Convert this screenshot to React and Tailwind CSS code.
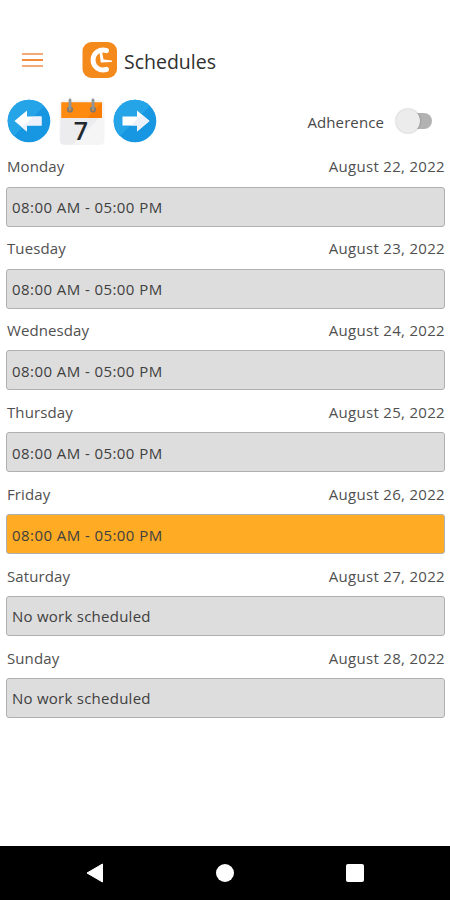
import { useState } from "react";
import clsx from "clsx";

const SHIFTS = [
  { day: "Monday", date: "August 22, 2022", label: "08:00 AM - 05:00 PM" },
  { day: "Tuesday", date: "August 23, 2022", label: "08:00 AM - 05:00 PM" },
  { day: "Wednesday", date: "August 24, 2022", label: "08:00 AM - 05:00 PM" },
  { day: "Thursday", date: "August 25, 2022", label: "08:00 AM - 05:00 PM" },
  { day: "Friday", date: "August 26, 2022", label: "08:00 AM - 05:00 PM", today: true },
  { day: "Saturday", date: "August 27, 2022", label: "No work scheduled", off: true },
  { day: "Sunday", date: "August 28, 2022", label: "No work scheduled", off: true },
];

const Logo = () => (
  <svg viewBox="0 0 36 36" className="h-9 w-9">
    <rect x="0.5" y="0" width="34.5" height="36" rx="9" fill="#f58a1c" />
    <path
      d="M24.5 8.6A10 10 0 1 0 24.5 27.4"
      fill="none"
      stroke="#fff"
      strokeWidth="5"
      strokeLinecap="round"
    />
    <path d="M17.5 10l2.5-.5 1.5 8 8.500 1-.2 1.400-11 .6z" fill="#fff" />
  </svg>
);

const ArrowCircle = ({ flip }) => (
  <svg viewBox="0 0 44 44" className="h-11 w-11">
    <circle cx="22" cy="22" r="21.3" fill="#1797e2" />
    <path d="M37.1 6.9A21.3 21.3 0 1 0 6.9 37.1z" fill="#25a4e8" />
    <g transform={flip ? "matrix(-1 0 0 1 44 0)" : undefined}>
      <path d="M7.5 22L20 11.5v6h14.5v9H20v6z" fill="#fff" />
    </g>
    {flip ? (
      <path d="M36.5 22L24 32.5v-6h-6.500L26.500 17.500 30 16.500z" fill="#edf1fb" />
    ) : (
      <path d="M34.5 17.5v9H20v6L14.8 28.5 26.5 17.5z" fill="#edf1fb" />
    )}
  </svg>
);

const CalendarIcon = () => (
  <svg viewBox="0 0 46 48" className="h-12 w-[46px]">
    <rect x="0.5" y="2" width="45" height="45" rx="5" fill="#f5f5f6" />
    <path d="M2 19h39L14 46.5H5q-4 0-4-4z" fill="#ececef" />
    <path d="M2.5 4.5H43v15.500H2.500z" fill="#fb7d05" />
    <path d="M2.5 4.500H43L28 20H2.500z" fill="#ff8a10" />
    {[11, 34].map((x) => (
      <g key={x} fill="none">
        <circle cx={x} cy="11.5" r="2.2" stroke="#7f786f" strokeWidth="1.8" />
        <path d={`M${x} 2v8.5`} stroke="#8b959b" strokeWidth="2.8" strokeLinecap="round" />
      </g>
    ))}
    <text
      x="22"
      y="41.5"
      textAnchor="middle"
      fontFamily="Open Sans, sans-serif"
      fontWeight="600"
      fontSize="25"
      fill="#1f292e"
    >
      7
    </text>
  </svg>
);

const ShiftRow = ({ shift }) => (
  <li className="h-[81.9px]">
    <div className="flex h-[40.5px] items-center justify-between pl-px text-[#505050]">
      <span className="tracking-[0.1px]">{shift.day}</span>
      <span className="tracking-[0.3px]">{shift.date}</span>
    </div>
    <div
      className={clsx(
        "flex h-10 items-center rounded-[3px] border border-[#b0b0b0] pl-[5px] pt-px text-[#404040]",
        shift.today ? "bg-[#ffab24]" : "bg-[#dddddd]",
        shift.off ? "tracking-[0.25px]" : "tracking-[0.43px]"
      )}
    >
      {shift.label}
    </div>
  </li>
);

export default function App() {
  const [adherence, setAdherence] = useState(false);

  return (
    <div className="flex h-[900px] w-[450px] flex-col bg-white font-['Open_Sans','Noto_Sans',sans-serif] text-[15px] text-[#484848]">
      {/* Header */}
      <header className="mt-[30px] flex h-[60px] shrink-0 items-center pl-[22px]">
        <button className="flex w-[21px] flex-col gap-1" aria-label="Menu">
          <span className="h-[2px] w-full bg-[#f7a877]" />
          <span className="h-[2px] w-full bg-[#f58a3c]" />
          <span className="h-[2px] w-full bg-[#f7a877]" />
        </button>
        <div className="ml-[39px]">
          <Logo />
        </div>
        <h1 className="ml-[6px] mt-[3px] text-[19.5px] text-[#303030]">Schedules</h1>
      </header>

      {/* Week navigation */}
      <div className="flex h-[56px] shrink-0 items-center pb-px pl-[7px] pr-[18px]">
        <button aria-label="Previous week" className="mt-[7px]">
          <ArrowCircle />
        </button>
        <button aria-label="Pick a week" className="ml-2 mt-[9px]">
          <CalendarIcon />
        </button>
        <button aria-label="Next week" className="ml-2 mt-[7px]">
          <ArrowCircle flip />
        </button>
        <span className="ml-auto mt-[9px] tracking-[0.1px]">Adherence</span>
        <button
          role="switch"
          aria-checked={adherence}
          aria-label="Adherence"
          onClick={() => setAdherence(!adherence)}
          className="relative ml-[13px] mt-[7px] flex h-6 w-[35px] items-center"
        >
          <span className="ml-[7px] h-4 w-7 rounded-full bg-[#b2b2b2]" />
          <span
            className={clsx(
              "absolute top-0 h-6 w-6 rounded-full bg-[#ececec] shadow-[0_0_2px_rgba(0,0,0,0.35)]",
              adherence ? "right-0" : "-left-px"
            )}
          />
        </button>
      </div>

      {/* Schedule */}
      <ul className="mt-[0.2px] grow pl-[6px] pr-[5px]">
        {SHIFTS.map((shift) => (
          <ShiftRow key={shift.day} shift={shift} />
        ))}
      </ul>

      {/* System navigation */}
      <nav className="flex h-[54px] shrink-0 items-center justify-between bg-black px-[86px]">
        <svg viewBox="0 0 18 20" className="h-5 w-[18px]">
          <path d="M1 10L16.5 1v18z" fill="#fff" stroke="#fff" strokeLinejoin="round" />
        </svg>
        <span className="h-[18px] w-[18px] rounded-full bg-white" />
        <span className="h-[18px] w-[18px] rounded-[2px] bg-white" />
      </nav>
    </div>
  );
}
